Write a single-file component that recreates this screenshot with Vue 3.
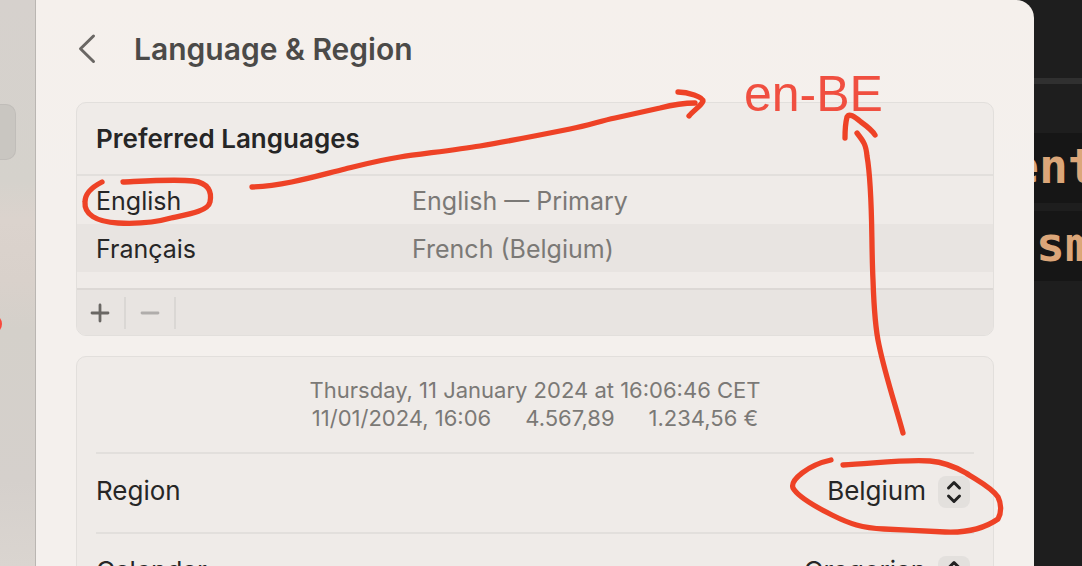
<script setup>
import { ref } from 'vue'

const languages = [
  { name: 'English', detail: 'English — Primary' },
  { name: 'Français', detail: 'French (Belgium)' },
]

const settings = ref([
  { id: 'region', label: 'Region', value: 'Belgium' },
  { id: 'calendar', label: 'Calendar', value: 'Gregorian' },
])
</script>

<template>
  <div class="desktop">
    <div class="window">
      <aside class="sidebar">
        <div class="selected"></div>
        <div class="badge"></div>
      </aside>
      <main class="content">
        <header class="title-bar">
          <button class="back" type="button" aria-label="Back">
            <svg width="20" height="32" viewBox="0 0 20 32" fill="none">
              <path d="M17.5 3 L4.5 15.8 L17.5 28.5" stroke="#6a6764" stroke-width="3" stroke-linecap="round" stroke-linejoin="round" />
            </svg>
          </button>
          <h1>Language &amp; Region</h1>
        </header>

        <section class="card">
          <h2>Preferred Languages</h2>
          <table>
            <tbody>
              <tr v-for="lang in languages" :key="lang.name">
                <th scope="row">{{ lang.name }}</th>
                <td>{{ lang.detail }}</td>
              </tr>
            </tbody>
          </table>
          <div class="toolbar">
            <button type="button" aria-label="Add language">
              <svg width="20" height="20" viewBox="0 0 20 20" fill="none">
                <path d="M2 10 H18 M10 2 V18" stroke="#6a6764" stroke-width="2.8" stroke-linecap="round" />
              </svg>
            </button>
            <button type="button" aria-label="Remove language" disabled>
              <svg width="20" height="20" viewBox="0 0 20 20" fill="none">
                <path d="M2 10 H18" stroke="#b0adab" stroke-width="2.8" stroke-linecap="round" />
              </svg>
            </button>
          </div>
        </section>

        <section class="card formats">
          <div class="sample">
            <p>Thursday, 11 January 2024 at 16:06:46 CET</p>
            <p class="numbers"><span>11/01/2024, 16:06</span><span>4.567,89</span><span>1.234,56 €</span></p>
          </div>
          <div v-for="s in settings" :key="s.id" class="setting">
            <label :for="s.id">{{ s.label }}</label>
            <div class="picker">
              <select :id="s.id" v-model="s.value">
                <option>{{ s.value }}</option>
              </select>
              <svg class="stepper" width="32" height="32" viewBox="0 0 32 32" fill="none">
                <rect width="32" height="32" rx="8" fill="#e3e0dd" />
                <path d="M10.5 12 L16 6.5 L21.5 12 M10.5 20 L16 25.5 L21.5 20" stroke="#222" stroke-width="3" stroke-linecap="round" stroke-linejoin="round" />
              </svg>
            </div>
          </div>
        </section>
      </main>
    </div>

    <div class="editor">
      <div class="rule"></div>
      <code class="line">ent</code>
      <code class="line second">sm</code>
    </div>

    <svg class="ink" width="1082" height="566" viewBox="0 0 1082 566" fill="none">
      <g stroke="#ee4226" stroke-width="5.3" stroke-linecap="round" stroke-linejoin="round">
        <path d="M102 182 C90 188 85 194 85 202 C84 214 96 222 118 223 C138 224 157 222 171 218 C190 214 208 211 210 202 C212 192 209 183 193 181 C175 179 145 181 123 182" />
        <path d="M252 187 C285 186 320 175 345 169 C365 164 380 160 400 157 C420 154 455 150 480 146 C510 141 540 135 570 129 C590 125 600 121 615 118 L660 108 C672 105 684 103 695 103" />
        <path d="M678 92 C688 92 703 97 703 101 C702 105 694 110 689 116" />
        <path d="M845 138 C845 130 846 121 847 117 C849 113 854 116 861 122 C868 127 872 130 875 135" />
        <path d="M857 133 C864 142 866 145 867 156 C873 190 871 240 873 280 C874 310 876 332 879 345 C885 374 895 404 903 433" />
        <path d="M831 460 C808 465 790 480 793 488 C798 497 816 507 832 515 C850 524 862 528 884 529 C905 530 922 531 945 532 C968 533 985 528 998 519 C1002 512 1001 503 998 497 C991 487 978 481 966 473 C952 465 942 462 930 461 C905 459 870 464 843 465" />
      </g>
      <text x="744" y="111">en-BE</text>
    </svg>
  </div>
</template>

<style>
body {
  margin: 0;
  background: #1e1e1e;
}
</style>

<style scoped>
.desktop {
  position: relative;
  display: flex;
  height: 100vh;
  overflow: hidden;
  background: #1e1e1e;
  font-family: Inter, "Liberation Sans", sans-serif;
  color: #262626;
}
.window {
  flex: 1;
  display: flex;
  overflow: hidden;
  border-top-right-radius: 18px;
  background: linear-gradient(#f5f0ec, #f4f0ed 200px);
}
.sidebar {
  box-sizing: border-box;
  width: 36px;
  flex: none;
  padding-top: 104px;
  border-right: 1px solid #bab6b2;
  background: linear-gradient(#d6d1cd 0, #d5d2cc 180px, #dbd3cd 220px, #d9d1cb 280px, #d4d0ca 330px, #d5d0cc 480px, #dad5d0 566px);
}
.selected {
  box-sizing: border-box;
  width: 16px;
  height: 56px;
  border: 1px solid #c0bdb9;
  border-left: 0;
  border-radius: 0 10px 10px 0;
  background: #c9c6c1;
}
.badge {
  width: 20px;
  height: 20px;
  margin: 154px 0 0 -18px;
  border-radius: 50%;
  background: #f9483c;
}
.content {
  flex: 1;
  padding: 0 40px;
}
.title-bar {
  display: flex;
  align-items: center;
  gap: 36px;
  height: 98px;
  margin-bottom: 4px;
}
button {
  padding: 0;
  border: 0;
  background: none;
}
.back {
  width: 22px;
  height: 32px;
}
.back svg,
.toolbar svg {
  display: block;
}
h1 {
  margin: 0;
  font-size: 30px;
  font-weight: 600;
  line-height: 36px;
  color: #4b4a48;
}
.card {
  margin-bottom: 20px;
  overflow: hidden;
  border: 1px solid #e2dfdc;
  border-radius: 10px;
  background: #efebe8;
}
h2 {
  margin: 0;
  padding: 1px 19px 0;
  border-bottom: 2px solid #e2dfdc;
  font-size: 26px;
  font-weight: 600;
  line-height: 70px;
}
table {
  width: 100%;
  margin-bottom: 16px;
  border-collapse: collapse;
  table-layout: fixed;
  font-size: 25px;
  line-height: 46px;
}
th,
td {
  padding: 2px 0 0;
  text-align: left;
  font-weight: 400;
}
th {
  width: 316px;
  padding-left: 19px;
}
td {
  color: #7b7976;
}
tr:nth-child(even) {
  background: #e8e4e1;
}
.toolbar {
  display: flex;
  align-items: center;
  height: 45px;
  margin-left: -1px;
  border-top: 2px solid #dcd8d5;
  background: #e8e4e1;
}
.toolbar button {
  display: grid;
  place-items: center;
  box-sizing: content-box;
  width: 48px;
  height: 32px;
  border-right: 2px solid #dad7d4;
}
.formats {
  padding: 0 19px;
}
.sample {
  padding: 19px 0 20px;
  text-align: center;
  font-size: 22px;
  line-height: 28px;
  color: #7b7976;
}
.sample p {
  margin: 0;
}
.numbers {
  display: flex;
  justify-content: center;
  gap: 34px;
}
.setting {
  box-sizing: border-box;
  display: flex;
  align-items: center;
  justify-content: space-between;
  height: 80px;
  padding-bottom: 6px;
  border-top: 2px solid #e2dfdc;
  font-size: 26px;
}
.picker {
  position: relative;
}
select {
  height: 40px;
  padding: 0 48px 0 0;
  border: 0;
  appearance: none;
  background: none;
  font: inherit;
  color: inherit;
  text-align-last: right;
}
.stepper {
  position: absolute;
  top: 6px;
  right: 4px;
  pointer-events: none;
}
.editor {
  flex: none;
  width: 48px;
  overflow: hidden;
  font-family: "DejaVu Sans Mono", monospace;
  font-size: 48px;
  font-weight: 700;
  color: #dba679;
}
.rule {
  height: 6px;
  margin: 78px 0 49px;
  background: #303030;
}
.line {
  display: block;
  margin-bottom: 8px;
  padding-bottom: 4px;
  background: #161616;
  font-family: inherit;
  line-height: 66px;
  text-indent: -24px;
  white-space: nowrap;
}
.second {
  text-indent: 2px;
}
.ink {
  position: absolute;
  top: 0;
  left: 0;
  pointer-events: none;
}
.ink text {
  font-family: "Liberation Sans", Arial, sans-serif;
  font-size: 50px;
  fill: #f04f40;
}
</style>
